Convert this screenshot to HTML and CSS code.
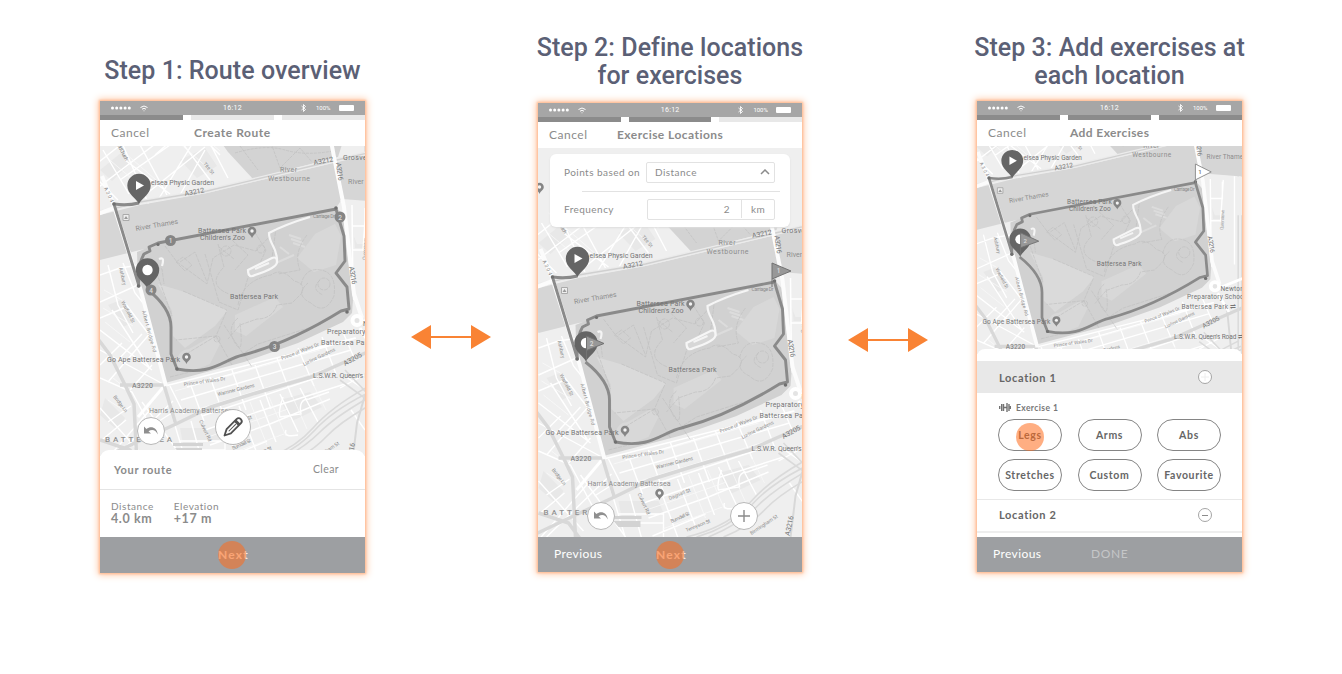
FILE: index.html
```html
<!DOCTYPE html>
<html lang="en">
<head>
<meta charset="utf-8">
<title>Route builder steps</title>
<link rel="stylesheet" href="styles.css">
</head>
<body>
<svg width="0" height="0" class="defs" aria-hidden="true">
  <defs>
    <g id="pin"><path d="M0 0C-3-6-11.7-10-11.7-18.500a11.700 11.700 0 0 1 23.400 0C11.700-10 3-6 0 0z" fill="#656565"/></g>
    <g id="poi"><path d="M0 6C-1 3-4.300 2-4.300-1a4.300 4.300 0 0 1 8.600 0C4.300 2 1 3 0 6z" fill="#858585"/><circle cy="-1" r="1.700" fill="#f4f4f4"/></g>
    <g id="wifi" fill="none" stroke="#fff"><path d="M.5 2.500Q4-.5 7.500 2.500M2 4.200Q4 2.500 6 4.200"/><circle cx="4" cy="5.800" r=".5" fill="#fff" stroke="none"/></g>
    <g id="bt"><path d="M.5 2l4 3.500L2.500 7.500V.5l2 2-4 3.500" fill="none" stroke="#fff" stroke-width=".9"/></g>
    <g id="dots" fill="#fff"><circle cx="1.500" cy="2" r="1.500"/><circle cx="5.700" cy="2" r="1.500"/><circle cx="9.900" cy="2" r="1.500"/><circle cx="14.100" cy="2" r="1.500"/><circle cx="18.300" cy="2" r="1.500"/></g>
    <g id="undo"><path d="M-.5-4.500V2.500h7L4 .3C7.500-1.800 11-1.300 13.300 3.500 12.500-3.500 6.500-5.500 1.900-2z" fill="#8f8f8f"/></g>
    <g id="map">
      <rect x="80" y="60" width="330" height="420" fill="#efefef"/>
      <!-- built blocks -->
      <g fill="#e8e8e8">
        <path d="M100 170l22-18 10 10-20 19zM180 160l25-12 12 18-20 12zM121 300l12 22-10 5-15-22zM352 210h15v38h-12zM105 398l20 20-8 12-17-15z"/>
        <path d="M280 400l30-8 12 15-30 14zM180 428l40 0 5 12-42 4z"/>
      </g>
      <path d="M218 138l10 14 25 27 85-22 8-25z" fill="#d3d3d3"/>
      <g fill="none" stroke="#c0c0c0" stroke-width=".7" stroke-dasharray="3 1"><path d="M240 146l18 24M270 140l10 28 20-20 12 14M235 153q30-9 50-3t48 1"/></g>
      <!-- streets -->
      <g fill="none" stroke="#fff" stroke-width="1.400">
        <path d="M95 190l85-65M95 165l38-30M112 120l37 85M132 130l35 65M103 150l26 44M165 120l45 60M190 105l38 73M120 180l60-42M145 195l60-48M158 200l50-82M125 160l45 34M180 195l25-45M155 155l25-22M200 135l20 20M98 180l20 20"/>
        <path d="M100 275l20-7 20-3M100 302l40-18 12-4M108 265l10 40 15 28M123 263l12 30 12 15M100 318l24-10M100 330l52 40M112 310l37 57M125 303l32 42M100 350l65 35M108 382l45-52M100 365l22-22M118 360l24-26M130 390l22-25"/>
        <path d="M170 386l14 28M190 383l14 38M210 377l15 42M232 370l14 40M255 365l16 44M277 358l15 39M298 348l16 38M322 337l14 37M342 330l13 30M181 400l170-50M187 387l169-49M165 386l190-48M202 416l120-40"/>
        <path d="M205 430l55-19 85-27M210 445l60-21 60-25M214 463l53-22M221 414l20 55M239 406l19 50M260 400l16 42M280 394l18 38M300 388l18 34M170 409l20 66M191 421l15 55M100 378l32 14 24 45M100 408l45 50M108 422l23-16M103 439l23-19M142 402l45 62M150 410l-50 57M173 401l-65 63M156 423l22-14M180 441h45v24M192 450h33"/>
        <path d="M283 397q-5 15-3 20l21-3q-3-15 8-15l20-7M286 430q-3 8 12 5M342 374l20 14M340 388l24-13M351 410l14 20"/>
        <path d="M165 385l-27 32" stroke-width="3"/>
      </g>
      <g fill="none" stroke="#fafafa" stroke-width=".7">
        <path d="M105 156l32 27M110 140l46 40M170 135l38 33M188 124l32 27M103 308l30 18M105 322l25 20M104 290l18 10M113 378l15 12M108 400l15 10M175 391l145-41M192 411l140-44M208 437l80-28M224 456l60-22M250 402l17 43M269 397l17 39M290 391l17 38M311 380l15 30"/>
      </g>
      <!-- secondary roads -->
      <g fill="none" stroke="#d8d8d8" stroke-width="3.500">
        <path d="M95 335l15 20 16 32 8 17 3 60M120 385h44M164 385l12 40M95 462l40-19 41-19 35-17 45-14 55-16 36-16 50-22M100 440l30 10 22 30"/>
        <path d="M365 395l-8 28-6 50M370 345l6 60" stroke-width="2"/>
      </g>
      <!-- rail lines -->
      <g fill="none" stroke="#dadada" stroke-width="1.600"><path d="M258 464q35-10 57-34t70-45M248 464q42-10 65-36t70-49M270 464q30-12 50-32t70-46M285 464q25-10 42-28t60-40M340 380l26 19M345 370l40 42M382 180v250M386 180v250M365 130v40M371 130v40"/></g>
      <g fill="#d3d3d3"><path d="M173 443h30v3h-30zM175 448l27 0v6h-22z"/></g>
      <!-- river -->
      <path d="M80 220l60-15 67-12 130-31 70-17v59l-65-5-6 9-170 38-26 4-40 10z" fill="#d6d6d6"/>
      <path d="M80 217l60-15 67-11 130-31 70-16" fill="none" stroke="#ebebeb" stroke-width="4"/>
      <path d="M80 217l60-15 67-11 130-31 70-16" fill="none" stroke="#d0d0d0" stroke-width="1.300"/>
      <path d="M340 200l67 4v40h-50z" fill="#efefef"/>
      <path d="M352 205l1 95M352 226h13v-18M352 250h12M366 206l-3 45M378 202v95" fill="none" stroke="#fff" stroke-width="1.500"/>
      <!-- park -->
      <path d="M137 252l30-12 170-32 6 7 10 85-1 13-9 9-45 21-54 19-79 21-13-53-14-48z" fill="#d1d1d1"/>
      <path d="M158 284l27 8 43 18-13 16-30 22-12-12-1-25z" fill="#dadada"/>
      <path d="M177 370q-2-20 12-21l23-13 8 8-10 20-20 8zM297 258l18-24 20-10 6 12-5 29-22 7zM235 315l40-18 8 10-37 29-11-5z" fill="#d8d8d8"/>
      <path d="M276 263l18-8M289 235l12 4M291 239l12 4M293 243l12 4M280 247l9 7" stroke="#dcdcdc" stroke-width="2"/>
      <g fill="none" stroke="#c0c0c0" stroke-width=".7" stroke-dasharray="4 1">
        <path d="M165 246l12 16 30 22 6-26 21-13 22 6 14-15M180 262l15-10 12 30M205 254l14 48 19 8 13-42M218 244l6 23q-18 18 5 27M232 240l16 15-13 15M238 305q5-25 33-30 11-8 23 6 13 3 7 13l-9 9-15 2q-5 14-20 14l-17 6-12 14M183 291l44 19-11 26-40 4M216 336l-33 20M216 336l16 29M224 325l28 42M238 318q-12 10-3 25t5-20M271 266l5-38M252 228l14 22-7 15M301 285q4-18 20-15t13 26q-9 20-23 7-17-8-3-20M320 280q-10 9 3 15M307 235q-14 18-7 35l-22 4M142 262l20 7 2 15M155 268l17 48M170 377l60-15 28-18 63-20"/>
        <circle cx="217" cy="339" r="3"/><circle cx="261" cy="249" r="4"/><circle cx="324" cy="284" r="6"/><circle cx="226" cy="251" r="5"/>
        <path d="M176 262l7-5 9 8-7 6zM219 247l15 12"/>
      </g>
      <path d="M310 217q-24 7-41 16c0 12 9 14 8 30M159 259q6-3 3 7" fill="none" stroke="#f5f5f5" stroke-width="2.200"/>
      <path d="M248 270l24-12q5-2 5 4t-22 13q-7 4-7-5z" fill="#d7d7d7" stroke="#f6f6f6" stroke-width="2.200"/>
      <path d="M255 269l14-6" stroke="#f4f4f4" stroke-width="2"/>
      <!-- bridges -->
      <g fill="none" stroke="#fcfcfc" stroke-width="4"><path d="M102 176l11 27 28 88 25 95M327 120l8 42 9 45 10 87 8 24M95 215l19-7"/></g>
      <circle cx="357" cy="320.500" r="4.500" fill="#e4e4e4" stroke="#fff" stroke-width="4"/>
      <path d="M362 322l30-12M360 328l12 20" stroke="#fff" stroke-width="3"/>
      <!-- route -->
      <path d="M139 203q-12 3-25 1l25 82q-2-20 5-32l6-3-1-4 9-4 178-34 2 7 6 20 1 25-9 12 11 14 2 22-8 2c-29 18-60 34-98 44-19 4-30 21-66 14l-6-15v-27q0-19-24-38" fill="none" stroke="#8a8a8a" stroke-width="2.900" stroke-linejoin="round"/>
      <g fill="#707070"><circle cx="114" cy="204" r="1.800"/><circle cx="138.500" cy="286" r="1.800"/><circle cx="158" cy="244.500" r="1.600"/><circle cx="336" cy="208" r="1.800"/><circle cx="347" cy="312" r="1.800"/><circle cx="177" cy="369" r="1.800"/></g>
      <path d="M123 214.500h6v6h-6z" fill="#eee" stroke="#aaa"/><path d="M124 219l2-3 2 3z" fill="#999"/>
      <!-- labels -->
      <g class="lbl">
        <text x="151" y="184.500" textLength="63">elsea Physic Garden</text>
        <text x="280" y="172" textLength="17" class="water">River</text>
        <text x="268" y="181" textLength="42" class="water">Westbourne</text>
        <text x="348" y="184" textLength="43" class="water">River Thames</text>
        <text x="136" y="231" textLength="43" class="water" transform="rotate(-10 136 231)">River Thames</text>
        <text x="343" y="160" textLength="35">Grosvenor</text>
        <text x="198" y="232.500" textLength="48">Battersea Park</text>
        <text x="200" y="239.500" textLength="45">Children's Zoo</text>
        <text x="230" y="299" textLength="48">Battersea Park</text>
        <text x="107" y="361.500" textLength="73">Go Ape Battersea Park</text>
        <text x="132" y="388" textLength="21">A3220</text>
        <text x="149" y="413" textLength="83" class="water">Harris Academy Battersea</text>
        <text x="327" y="334" textLength="63">Preparatory School</text>
        <text x="363" y="326" textLength="25">Newton</text>
        <text x="321" y="345" textLength="50">Battersea Park</text>
        <text x="373" y="345" textLength="9">⇌</text>
        <text x="313" y="377.500" textLength="75">L.S.W.R. Queen's Road ⇌</text>
        <text x="105" y="442" class="area">BATTERSEA</text>
        <text x="185" y="196" transform="rotate(-11 185 196)" textLength="20">A3212</text>
        <text x="314" y="165" transform="rotate(-11 314 165)" textLength="20">A3212</text>
        <text x="104" y="188" transform="rotate(65 104 188)" textLength="16" class="small">A304</text>
        <text x="336" y="163" transform="rotate(82 336 163)" textLength="18">A3216</text>
        <text x="349" y="267" transform="rotate(80 349 267)" textLength="18">A3216</text>
        <text x="345" y="366" transform="rotate(-29 345 366)" textLength="20">A3205</text>
        <text x="351" y="463" transform="rotate(-78 351 463)" textLength="20">A3216</text>
      </g>
      <g class="lbl small">
        <text x="142" y="311" transform="rotate(75 142 311)" textLength="43">Albert Bridge Rd</text>
        <text x="121" y="302" transform="rotate(62 121 302)" textLength="24">Warfield St</text>
        <text x="119" y="268" transform="rotate(77 119 268)" textLength="18">Ashbury</text>
        <text x="113" y="397" transform="rotate(52 113 397)" textLength="20">Bridge Ln</text>
        <text x="203" y="164" transform="rotate(50 203 164)" textLength="14">Tite St</text>
        <text x="117" y="145" transform="rotate(62 117 145)" textLength="18">Old Church</text>
        <text x="313" y="218" textLength="22">Carriage Dr</text>
        <text x="184" y="386" transform="rotate(-8 184 386)" textLength="42">Prince of Wales Dr</text>
        <text x="282" y="360" transform="rotate(-21 282 360)" textLength="40">Prince of Wales Dr</text>
        <text x="304" y="366" transform="rotate(-26 304 366)" textLength="35">Lurline Gardens</text>
        <text x="218" y="396" transform="rotate(-14 218 396)" textLength="38">Warriner Gardens</text>
        <text x="199" y="421" transform="rotate(65 199 421)" textLength="23">Culvert Rd</text>
        <text x="231" y="427" transform="rotate(-22 231 427)" textLength="23">Dagnall St</text>
        <text x="233" y="450" transform="rotate(-24 233 450)" textLength="20">Burndell St</text>
        <text x="248" y="459" transform="rotate(-22 248 459)" textLength="26">Tennyson St</text>
        <text x="313" y="462" transform="rotate(-34 313 462)" textLength="32">Birmingham St</text>
        <text x="366" y="260" transform="rotate(-87 366 260)" textLength="22" class="far">Queenstown</text>
      </g>
      <use href="#poi" x="252" y="232"/><use href="#poi" x="186.500" y="358"/><use href="#poi" x="101" y="115"/>
      <use href="#pin" x="139" y="204"/><path d="M136 181v9l8-4.500z" fill="#fff"/>
      <use href="#pin" x="147.500" y="288.500"/><circle cx="147.500" cy="270" r="5.200" fill="#fff"/>
    </g>
  </defs>
</svg>

<main class="flow">
  <section class="step step-one">
    <h2>Step 1: Route overview</h2>
    <div class="phone">
      <div class="status"><svg class="dots" width="20" height="4"><use href="#dots"/></svg><svg class="wifi" width="8" height="7"><use href="#wifi"/></svg><span class="clock">16:12</span><svg class="bt" width="5" height="8"><use href="#bt"/></svg><span class="pct">100%</span><i class="battery"></i></div>
      <div class="progress"><i class="on"></i><i></i><i></i></div>
      <header class="nav"><span class="cancel">Cancel</span><b class="t1">Create Route</b></header>
      <div class="mapbox map-one">
        <svg viewBox="100 146 265 310" width="265" height="310"><use href="#map"/>
          <g fill="#858585"><circle cx="170.500" cy="240.500" r="5.500"/><circle cx="340" cy="217" r="5.500"/><circle cx="274.500" cy="346.500" r="5.500"/><circle cx="151" cy="290" r="5.500"/></g>
          <g class="mark"><text x="170.500" y="243">1</text><text x="340" y="219.500">2</text><text x="274.500" y="349">3</text><text x="151" y="292.500">4</text></g>
        </svg>
        <span class="fab fab-undo"><svg width="26" height="26" viewBox="-6.500 -13 26 26"><use href="#undo"/></svg></span>
        <span class="fab fab-edit"><svg width="26" height="26" viewBox="-13 -13 26 26"><g transform="rotate(45)" fill="none" stroke="#505050" stroke-width="1.800" stroke-linejoin="round"><path d="M-3-8q0-3 3-3t3 3V6L0 12-3 6z"/><path d="M-3-6h6" stroke-width="3"/><path d="M0-4V6" stroke-width="1"/></g></svg></span>
      </div>
      <div class="sheet">
        <div class="sheet-head"><b>Your route</b><span>Clear</span></div>
        <dl class="stats"><div><dt>Distance</dt><dd>4.0 km</dd></div><div><dt>Elevation</dt><dd>+17 m</dd></div></dl>
      </div>
      <footer class="bar"><b class="next">Next<i class="tap"></i></b></footer>
    </div>
  </section>

  <div class="link"><svg width="80" height="24" viewBox="0 0 80 24"><path d="M0 12L20 0v24zM80 12L60 0v24zM20 11h40v2H20z" fill="#f98334"/></svg></div>

  <section class="step step-two">
    <h2>Step 2: Define locations<br>for exercises</h2>
    <div class="phone">
      <div class="status"><svg class="dots" width="20" height="4"><use href="#dots"/></svg><svg class="wifi" width="8" height="7"><use href="#wifi"/></svg><span class="clock">16:12</span><svg class="bt" width="5" height="8"><use href="#bt"/></svg><span class="pct">100%</span><i class="battery"></i></div>
      <div class="progress"><i class="on"></i><i class="on"></i><i></i></div>
      <header class="nav"><span class="cancel">Cancel</span><b class="t2">Exercise Locations</b></header>
      <div class="mapbox">
        <svg viewBox="99.500 75 264 389" width="264" height="389"><use href="#map"/><use href="#poi" x="221" y="421"/>
          <g fill="#989898" stroke="#727272"><path d="M333.500 214V190l19 8-19 8M148 287V263l17.500 7.500-17.500 7"/></g>
          <g class="mark"><text x="340" y="200">1</text><text x="153" y="273">2</text></g>
        </svg>
        <div class="form">
          <div class="field"><label>Points based on</label><span class="select">Distance<svg width="10" height="6"><path d="M1 5l4-4 4 4" fill="none" stroke="#8b8b8b" stroke-width="1.500"/></svg></span></div>
          <hr>
          <div class="field"><label>Frequency</label><span class="amount"><span>2</span><span class="unit">km</span></span></div>
        </div>
        <span class="fab fab-undo"><svg width="26" height="26" viewBox="-6.500 -13 26 26"><use href="#undo"/></svg></span>
        <span class="fab fab-add"><svg width="12" height="12"><path d="M6 0v12M0 6h12" stroke="#8b8b8b" stroke-width="1.400"/></svg></span>
      </div>
      <footer class="bar"><span class="prev">Previous</span><b class="next">Next<i class="tap"></i></b></footer>
    </div>
  </section>

  <div class="link link-two"><svg width="80" height="24" viewBox="0 0 80 24"><path d="M0 12L20 0v24zM80 12L60 0v24zM20 11h40v2H20z" fill="#f98334"/></svg></div>

  <section class="step step-three">
    <h2>Step 3: Add exercises at<br>each location</h2>
    <div class="phone">
      <div class="status"><svg class="dots" width="20" height="4"><use href="#dots"/></svg><svg class="wifi" width="8" height="7"><use href="#wifi"/></svg><span class="clock">16:12</span><svg class="bt" width="5" height="8"><use href="#bt"/></svg><span class="pct">100%</span><i class="battery"></i></div>
      <div class="progress"><i class="on"></i><i class="on"></i><i class="on"></i></div>
      <header class="nav"><span class="cancel">Cancel</span><b class="t3">Add Exercises</b></header>
      <div class="mapbox map-three">
        <svg viewBox="101.100 169.600 285 223.700" width="265" height="208"><use href="#map"/>
          <g fill="#989898" stroke="#727272"><path d="M148 287V263l19.500 9-19.500 7"/><path d="M336 213V189l17 8.500-17 8.500" fill="#fff" stroke="#8a8a8a"/></g>
          <g class="mark"><text x="153" y="274">2</text><text x="341" y="200" class="dark">1</text></g>
        </svg>
      </div>
      <div class="picker">
        <div class="loc loc-open"><b>Location 1</b><i class="ring"><svg width="8" height="8"><path d="M4 0v8M0 4h8" stroke="#eeeeee"/></svg></i></div>
        <div class="exercise">
          <div class="ex-title"><svg width="12" height="9"><path d="M.7 3v3M2.700 1v7M4.500 1v7M8 0v9M10 1v7M11.500 3v3M4 4.500h4" stroke="#727272" stroke-width="1.400"/></svg><b>Exercise 1</b></div>
          <div class="pills"><b>Legs<i class="tap"></i></b><b>Arms</b><b>Abs</b><b>Stretches</b><b>Custom</b><b>Favourite</b></div>
        </div>
        <div class="loc loc-next"><b>Location 2</b><i class="ring"><svg width="8" height="8"><path d="M1 4.500h6" stroke="#8b8b8b"/></svg></i></div>
      </div>
      <footer class="bar"><span class="prev">Previous</span><span class="done">DONE</span></footer>
    </div>
  </section>
</main>
</body>
</html>
```

FILE: styles.css
```css
* { box-sizing: border-box; }
body { margin: 0; background: #fff; font-family: Lato, sans-serif; color: #8b8b8b; overflow: hidden; }
i { font-style: normal; }
svg { display: block; }
.defs { position: absolute; }

.flow { display: grid; grid-template-columns: 285px 152px 286px 154px 285px; padding-left: 90px; height: 674px; }
.step { display: flex; flex-direction: column; align-items: center; }
.step h2 { margin: 0; font: 500 25px/28px Roboto, sans-serif; color: #5b6075; text-align: center; white-space: nowrap; }
.step-one { padding-top: 57px; }
.step-one h2 { margin-bottom: 16px; letter-spacing: .05px; }
.step-two, .step-three { padding-top: 34px; }
.step-two h2 { margin-bottom: 13px; letter-spacing: .05px; }
.step-three h2 { margin-bottom: 11px; letter-spacing: .05px; }
.link { padding: 325px 0 0 36px; }
.link-two { padding: 328px 0 0 35px; }

.phone { display: flex; flex-direction: column; width: 265px; height: 472px; background: #fff; box-shadow: 0 0 2px 1px #ffbb91, 0 0 7px 2px #ffcaa8; }
.step-two .phone { width: 264px; height: 469px; }
.step-three .phone { height: 471px; }

.status { flex: none; display: flex; align-items: center; height: 14px; padding: 0 11px; background: #a6a6a6; color: #fff; font: 7px/14px Roboto, sans-serif; }
.wifi { margin-left: 9px; }
.clock { width: 20px; margin-left: 75px; letter-spacing: .3px; white-space: nowrap; }
.bt { margin-left: 58px; }
.pct { width: 15px; margin-left: 10px; font-size: 6px; }
.battery { width: 15px; height: 6px; margin-left: 8px; border-radius: 1px; background: #fff; }
.progress { flex: none; display: flex; gap: 8px; height: 5px; }
.progress i { flex: 1; background: #e8e8e8; }
.progress .on { background: #8b8b8b; }

.nav { flex: none; display: flex; align-items: center; height: 26px; padding: 0 0 1px 11px; font-size: 12px; letter-spacing: .5px; }
.cancel { width: 83px; }
.nav b { font-size: 12px; }
.nav .t1 { letter-spacing: .55px; }
.nav .t2 { margin-left: -15px; letter-spacing: .45px; }
.nav .t3 { margin-left: -1px; letter-spacing: .4px; }

.mapbox { position: relative; flex: none; overflow: hidden; height: 389px; }
.map-one { height: 310px; }
.map-three { height: 208px; }
.lbl { font: 7px Roboto, sans-serif; fill: #757575; }
.lbl .water { fill: #8d8d8d; }
.lbl.small, .lbl .small { font-size: 5px; fill: #8b8b8b; }
.lbl .far { fill: #a8a8a8; }
.lbl .area { font-size: 8px; font-weight: 500; letter-spacing: 2.900px; fill: #929292; }
.mark { font: 500 6.500px Roboto, sans-serif; fill: #ddd; text-anchor: middle; }
.mark .dark { fill: #777; }

.fab { position: absolute; display: grid; place-items: center; width: 28px; height: 28px; border: 1px solid #b8b8b8; border-radius: 50%; background: #fff; }
.map-one .fab-undo { left: 37px; top: 271px; }
.fab-edit { left: 115px; top: 263px; width: 36px; height: 36px; }
.fab-undo { left: 49px; top: 354px; }
.fab-add { left: 192px; top: 354px; }

.sheet { position: relative; flex: 1; margin-top: -6px; background: #fff; border-radius: 9px 9px 0 0; }
.sheet-head { display: flex; justify-content: space-between; align-items: center; height: 40px; padding: 0 26px 1px 14px; border-bottom: 1px solid #e4e4e4; font-size: 11px; letter-spacing: .7px; }
.sheet-head span { font-size: 10.500px; letter-spacing: .4px; }
.stats { display: flex; gap: 20px; margin: 0; padding: 10px 11px; }
.stats dt { font-size: 10px; line-height: 12px; letter-spacing: .55px; }
.stats dd { margin: 0; font-size: 12.500px; line-height: 14px; font-weight: 700; letter-spacing: .6px; }

.bar { position: relative; flex: none; display: flex; align-items: center; height: 36px; background: #9d9fa2; color: #fff; font-size: 12px; }
.step-two .bar, .step-three .bar { height: 35px; }
.bar b { letter-spacing: 1.200px; color: #f3e9e3; }
.next { position: relative; margin-left: 118px; padding-bottom: 2px; }
.prev { width: 100px; padding-left: 16px; letter-spacing: .4px; line-height: 32px; padding-bottom: 2px; }
.prev + .next { margin-left: 18px; padding: 0; }
.done { margin-left: 14px; padding-bottom: 2px; letter-spacing: .6px; color: #c5c6c8; }
.tap { position: absolute; left: 0; top: 50%; width: 28px; height: 28px; margin-top: -14px; border-radius: 50%; background: rgba(255, 108, 27, .55); }

.form { position: absolute; left: 12px; top: 6px; width: 240px; height: 73px; padding: 8px 15px 0 14px; border-radius: 6px; background: #fff; font-size: 10px; letter-spacing: .45px; box-shadow: 0 1px 2px #ddd; }
.field { display: flex; justify-content: space-between; align-items: center; height: 21px; }
.field label { padding-bottom: 2px; }
.select, .amount { display: flex; align-items: center; justify-content: space-between; width: 129px; height: 21px; padding-bottom: 1px; border: 1px solid #e2e2e2; border-radius: 2px; }
.select { padding: 0 4px 2px 8px; }
.form hr { width: 198px; margin: 8px 0 7px 18px; border: 0; border-top: 1px solid #e2e2e2; }
.amount { width: 128px; justify-content: flex-end; }
.unit { width: 33px; margin-left: 11px; border-left: 1px solid #e2e2e2; line-height: 18px; text-align: center; }

.picker { position: relative; flex: 1; margin-top: -5px; padding-top: 12px; border-radius: 8px 8px 0 0; background: #fff; color: #666; }
.loc { display: flex; justify-content: space-between; align-items: center; height: 32px; padding: 0 30px 0 22px; font-size: 11px; letter-spacing: .65px; }
.loc-open { background: #e8e8e8; }
.ring { display: grid; place-items: center; width: 14px; height: 14px; border: 1px solid #a5a5a5; border-radius: 50%; background: #fff; }
.exercise { height: 106px; padding: 9px 21px 0; }
.ex-title { display: flex; align-items: center; gap: 5px; height: 11px; padding-left: 1px; font-size: 8.500px; letter-spacing: .4px; color: #777; }
.pills { display: grid; grid-template-columns: repeat(3, 64px); column-gap: 15.500px; row-gap: 8px; margin-top: 6px; }
.pills b { position: relative; height: 32px; border: 1px solid #858585; border-radius: 16px; font-size: 10.500px; line-height: 30px; letter-spacing: .65px; text-align: center; }
.pills .tap { left: 17px; top: 16px; margin-top: -13px; }
.loc-next { height: 34px; padding-bottom: 2px; border-top: 1px solid #e8e8e8; border-bottom: 2px solid #eee; }
```
